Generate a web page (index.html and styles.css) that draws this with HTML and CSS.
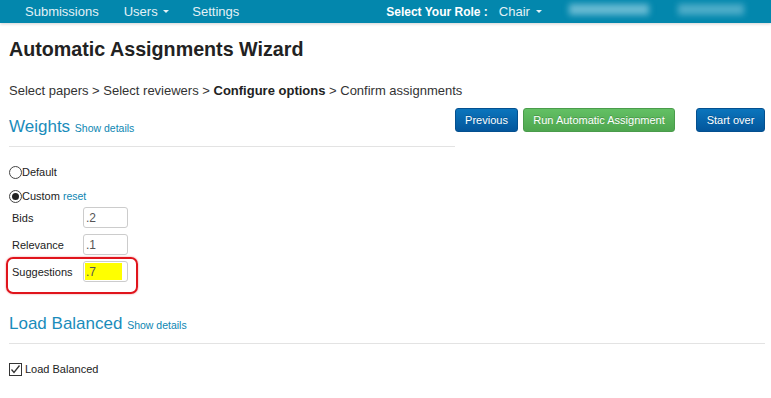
FILE: index.html
```html
<!DOCTYPE html>
<html>
<head>
<meta charset="utf-8">
<link rel="stylesheet" href="styles.css">
</head>
<body>
<nav class="topbar">
  <a class="nav-item">Submissions</a>
  <a class="nav-item">Users <span class="caret"></span></a>
  <a class="nav-item">Settings</a>
  <span class="role-label">Select Your Role :</span>
  <a class="nav-item role">Chair <span class="caret"></span></a>
  <span class="blur blur-a"></span>
  <span class="blur blur-b"></span>
</nav>
<main class="page">
  <h1 class="title">Automatic Assignments Wizard</h1>
  <p class="crumbs">Select papers &gt; Select reviewers &gt; <b>Configure options</b> &gt; Confirm assignments</p>
  <div class="row">
    <section class="weights">
      <h2 class="sec-head">Weights <a class="details">Show details</a></h2>
      <div class="opt"><span class="radio"></span>Default</div>
      <div class="opt custom"><span class="radio checked"></span>Custom <a class="reset">reset</a></div>
      <div class="field"><label>Bids</label><input class="num" value=".2"></div>
      <div class="field"><label>Relevance</label><input class="num" value=".1"></div>
      <div class="field marked"><label>Suggestions</label><input class="num hl" value=".7"></div>
    </section>
    <div class="actions">
      <button class="btn blue prev">Previous</button>
      <button class="btn green">Run Automatic Assignment</button>
      <button class="btn blue start">Start over</button>
    </div>
  </div>
  <section class="load">
    <h2 class="sec-head">Load Balanced <a class="details">Show details</a></h2>
    <div class="check-row">
      <span class="checkbox"><svg width="13" height="13" viewBox="0 0 13 13"><path d="M2.5 6.5 L5 9.5 L10.5 2.5" fill="none" stroke="#333" stroke-width="1.3"/></svg></span>Load Balanced
    </div>
  </section>
</main>
</body>
</html>
```

FILE: styles.css
```css
* { box-sizing: border-box; }
html, body { margin: 0; padding: 0; background: #fff; }
body { font-family: "Liberation Sans", Arial, sans-serif; color: #333; font-size: 11px; }

.topbar {
  height: 23px;
  background: #0387ad;
  display: flex;
  align-items: center;
  position: relative;
  box-shadow: 0 1px 3px rgba(0,0,0,0.18);
  font-size: 13px;
}
.nav-item { color: #e3f1f6; text-decoration: none; white-space: nowrap; }
.topbar .nav-item:nth-child(1) { margin-left: 25px; }
.topbar .nav-item:nth-child(2) { margin-left: 25px; }
.topbar .nav-item:nth-child(3) { margin-left: 23px; }
.role-label { margin-left: 147px; color: #fff; font-weight: bold; font-size: 12px; white-space: nowrap; }
.role { margin-left: 11px; }
.caret {
  display: inline-block;
  width: 0; height: 0;
  border-left: 3.5px solid transparent;
  border-right: 3.5px solid transparent;
  border-top: 3.5px solid #e3f1f6;
  vertical-align: middle;
  margin-left: 2px;
  margin-top: -2px;
}
.blur {
  position: absolute;
  top: 4px;
  height: 11px;
  background: rgba(190, 230, 242, 0.55);
  filter: blur(3px);
}
.blur-a { left: 569px; width: 80px; }
.blur-b { left: 678px; width: 66px; background: rgba(170, 220, 236, 0.45); }

.page { padding: 0 6px 0 9px; }
.title {
  font-size: 19.7px;
  font-weight: bold;
  color: #222;
  margin: 14px 0 0 0;
  line-height: 24px;
}
.crumbs {
  font-size: 13px;
  color: #333;
  margin: 22px 0 0 0;
  line-height: 16px;
}
.crumbs b { color: #222; }

.row { display: flex; align-items: flex-start; margin-top: 7px; }
.weights { width: 446px; }
.sec-head {
  font-weight: normal;
  font-size: 17px;
  color: #1a8cbb;
  margin: 0;
  padding: 11px 0 8px 0;
  line-height: 20px;
  border-bottom: 1px solid #e3e3e3;
}
.details { font-size: 10.5px; color: #0d86b2; }

.actions { display: flex; margin-top: 2px; }
.btn {
  font-family: "Liberation Sans", Arial, sans-serif;
  font-size: 11px;
  color: #fff;
  height: 24px;
  padding: 0;
  border-radius: 3px;
  border: 1px solid;
  text-shadow: 0 -1px 0 rgba(0,0,0,0.2);
  line-height: 22px;
  white-space: nowrap;
  text-align: center;
}
.blue {
  background: linear-gradient(#0b75bd, #03569c);
  border-color: #04508f;
}
.green {
  background: linear-gradient(#63c064, #4ea64f);
  border-color: #4a9c4b;
  margin-left: 5px;
  width: 152px;
}
.prev { width: 63px; }
.start { margin-left: 21px; width: 69px; }

.opt {
  display: flex;
  align-items: center;
  height: 14px;
  margin-top: 18px;
  color: #222;
}
.opt.custom { margin-top: 10px; }
.radio {
  width: 13px; height: 13px;
  border: 1px solid #444;
  border-radius: 50%;
  display: inline-flex;
  align-items: center;
  justify-content: center;
}
.radio.checked::after {
  content: "";
  width: 7px; height: 7px;
  border-radius: 50%;
  background: #222;
}
.reset { color: #0d86b2; font-size: 10.5px; margin-left: 3px; }

.field {
  display: flex;
  align-items: center;
  margin-top: 4px;
  padding-left: 3px;
  position: relative;
}
.field + .field { margin-top: 6px; }
.field label { width: 71px; color: #222; }
.num {
  width: 45px;
  height: 21px;
  border: 1px solid #ccc;
  border-radius: 3px;
  font-family: "Liberation Sans", Arial, sans-serif;
  font-size: 12px;
  color: #555;
  padding: 0 2px;
  margin: 0;
}
.hl {
  background: #fff linear-gradient(#ffff00, #ffff00) no-repeat 1px 1px / 37px 17px;
}
.marked::after {
  content: "";
  position: absolute;
  left: -3px;
  top: -4px;
  width: 128px;
  height: 33px;
  border: 2px solid #e0141c;
  border-radius: 7px;
  box-shadow: 0 0 2px rgba(224,20,28,0.5);
}

.load { margin-top: 21px; }
.check-row {
  display: flex;
  align-items: center;
  margin-top: 17px;
  color: #222;
}
.checkbox {
  width: 13px; height: 13px;
  border: 1px solid #333;
  display: inline-flex;
  margin-right: 3px;
  margin-top: 2px;
}
.checkbox svg { margin: -1px; }
```
